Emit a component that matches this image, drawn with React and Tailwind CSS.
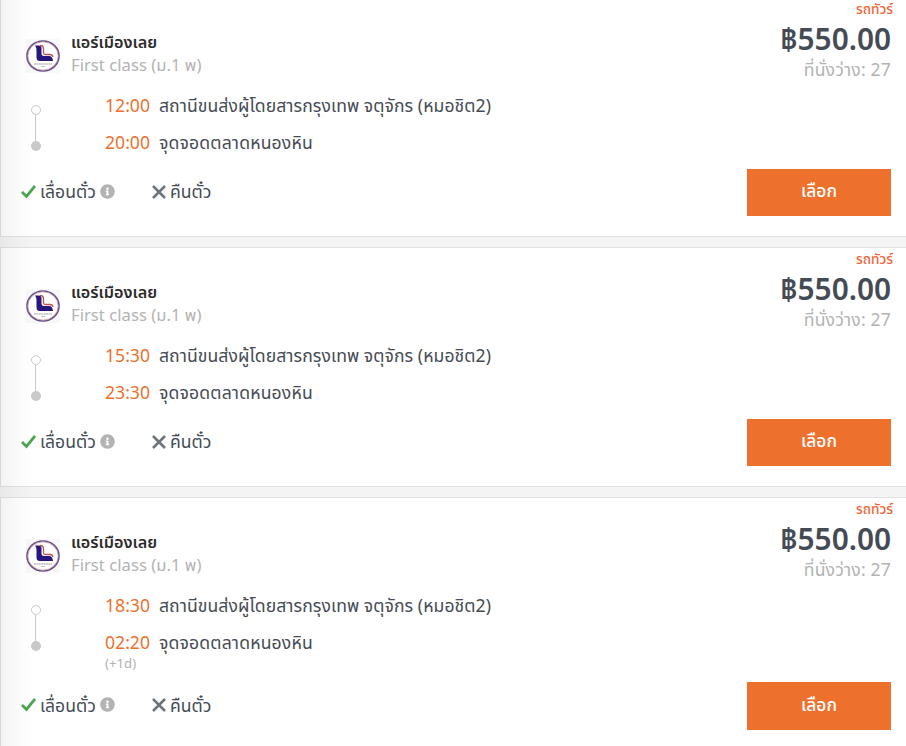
import React from "react";
import { FaInfoCircle } from "react-icons/fa";

const trips = [
  { id: 1, depart: "12:00", arrive: "20:00" },
  { id: 2, depart: "15:30", arrive: "23:30" },
  { id: 3, depart: "18:30", arrive: "02:20", nextDay: "(+1d)" },
];

const Logo = () => (
  <svg viewBox="0 0 34 34" className="w-[34px] h-[34px] shrink-0">
    <rect width="34" height="34" fill="#f8f8f8" />
    <ellipse cx="17" cy="17" rx="16" ry="15" fill="#fff" stroke="#65508c" strokeWidth="1.6" />
    <ellipse cx="17" cy="17" rx="15.2" ry="14.2" fill="none" stroke="#c98f95" strokeWidth="0.8" />
    <path d="M9 6.5h4q2.500 0 2.500 3v5.500q0 2 2.500 2h5q3.500 0 4 5H14q-3.500 0-3.500-3.500V11q0-3-1.500-4.500z" fill="#26167e" />
    <path d="M14 6.500q3.500 0 3.500 3.500v4q0 1.500 2 1.500h4.500q2.500 0 3 2.500" fill="none" stroke="#c44f50" strokeWidth="1.3" />
    <path d="M8 25h18" stroke="#a2a2aa" strokeWidth="1.2" strokeDasharray="2 .4" />
    <path d="M15 27.500h4" stroke="#b5b5ba" strokeWidth="0.8" />
  </svg>
);

const TripCard = ({ trip }) => (
  <article className="flex justify-between border border-r-0 border-[#e0e0e6] bg-white pb-5">
    <div className="pt-[33px]">
      <div className="flex gap-[11px] pl-[25px]">
        <div className="pt-2">
          <Logo />
        </div>
        <div>
          <h2 className="h-[22px] leading-[22px] text-[16.2px] font-semibold text-[#2b2b2b] whitespace-nowrap">
            แอร์เมืองเลย
          </h2>
          <p className="h-[23px] leading-[23px] text-[16.6px] tracking-[0.04px] text-[#b3b3b3] whitespace-nowrap">
            First class (ม.1 พ)
          </p>
        </div>
      </div>

      <div className="mt-[11px] flex">
        <div className="ml-[29px] mt-[18px] flex w-3 flex-col">
          <span className="ml-px h-[10px] w-[10px] rounded-full border border-[#c9c9c9] bg-white"></span>
          <span className="ml-[5px] h-[26px] w-px bg-[#c9c9c9]"></span>
          <span className="ml-px h-[10px] w-[10px] rounded-full bg-[#c9c9c9]"></span>
        </div>
        <ul className="ml-[63px] text-[17.6px] text-[#454b54]">
          <li className="flex h-[37px] items-center whitespace-nowrap">
            <time className="w-[54px] text-[#ed702d]">{trip.depart}</time>
            <span className="tracking-[0.06px]">สถานีขนส่งผู้โดยสารกรุงเทพ จตุจักร (หมอชิต2)</span>
          </li>
          <li className="flex h-[37px] items-center whitespace-nowrap">
            <time className="w-[54px] text-[#ed702d]">{trip.arrive}</time>
            <span className="tracking-[0.16px]">จุดจอดตลาดหนองหิน</span>
          </li>
          {trip.nextDay && (
            <li className="-mt-[6px] h-[19.5px] leading-[16px] text-[13.2px] text-[#b3b3b3]">
              {trip.nextDay}
            </li>
          )}
        </ul>
      </div>

      <div className="mt-[8px] flex h-[47px] items-center pb-[2px] pl-5 text-[17.6px] text-[#454b54] whitespace-nowrap">
        <div className="flex w-[131px] items-center">
          <svg viewBox="0 0 15 15" className="h-[15px] w-[15px] shrink-0">
            <path d="M1 8l4.500 4.500L14 2" fill="none" stroke="#4ba552" strokeWidth="2.8" />
          </svg>
          <span className="ml-[4px] w-[56px]">เลื่อนตั๋ว</span>
          <FaInfoCircle className="ml-1 h-[15px] w-[15px] shrink-0 text-[#b3b3b3]" />
        </div>
        <svg viewBox="0 0 14 14" className="h-[14px] w-[14px]">
          <path d="M1 1l12 12M13 1L1 13" stroke="#6b737b" strokeWidth="2.5" />
        </svg>
        <span className="ml-1">คืนตั๋ว</span>
      </div>
    </div>

    <div className="flex flex-col items-end pr-[15px] whitespace-nowrap">
      <span className="-mr-[2px] mt-[2px] h-[19px] leading-[18px] text-[13.6px] font-medium text-[#ee6639]">รถทัวร์</span>
      <span className="h-[38px] leading-[40px] text-[29.8px] font-semibold text-[#454b54]">฿550.00</span>
      <span className="h-[24px] leading-[24px] text-[17.6px] tracking-[0.16px] text-[#b3b3b3]">ที่นั่งว่าง: 27</span>
      <button className="mt-auto h-[47.4px] w-[144px] bg-[#ed702d] pb-1 text-[17.4px] font-medium text-white">
        เลือก
      </button>
    </div>
  </article>
);

const App = () => {
  return (
    <main className="relative h-[746px] overflow-hidden bg-[#f4f4f4] font-['Noto_Sans','Noto_Sans_Thai',sans-serif]">
      <div className="-mt-[3px] flex flex-col gap-[10px]">
        {trips.map((trip) => (
          <TripCard key={trip.id} trip={trip} />
        ))}
      </div>
      <div className="pointer-events-none absolute inset-y-0 left-0 w-[34px] bg-linear-to-r from-black/5 via-black/2 to-transparent"></div>
    </main>
  );
};

export default App;
